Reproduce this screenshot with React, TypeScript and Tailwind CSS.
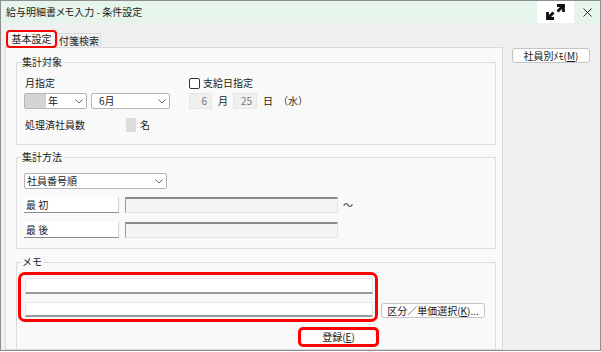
import React from "react";

const Chevron = () => (
  <svg width="8" height="5" viewBox="0 0 8 5">
    <path d="M0.5 0.5L4 4L7.5 0.5" fill="none" stroke="#606060" strokeWidth="1" />
  </svg>
);

const ExpandIcon = () => (
  <svg width="19" height="16" viewBox="0 0 19 16">
    <path d="M11 1.5H17.5V8" fill="none" stroke="#111" strokeWidth="2.8" />
    <path d="M17.5 1.5L11.5 7.5" fill="none" stroke="#111" strokeWidth="2.8" />
    <path d="M1.5 8V14.5H8" fill="none" stroke="#111" strokeWidth="2.8" />
    <path d="M1.5 14.5L7.5 8.5" fill="none" stroke="#111" strokeWidth="2.8" />
  </svg>
);

const CloseIcon = () => (
  <svg width="9" height="9" viewBox="0 0 9 9">
    <path d="M0.5 0.5L8.5 8.5M8.5 0.5L0.5 8.5" fill="none" stroke="#333" strokeWidth="1" />
  </svg>
);

export default function App() {
  return (
    <div className="w-[601px] h-[351px] border border-[#8e8e8e] bg-[#f0f0f0] flex flex-col overflow-hidden font-['Noto_Sans_CJK_JP','Noto_Sans',sans-serif] text-[10px] leading-[14px] text-[#1b1b1b]">
      {/* title bar */}
      <div className="h-[22px] shrink-0 flex items-stretch bg-[#e6f5eb]">
        <div className="pl-[5px] flex items-center text-[10px] text-[#222] [font-feature-settings:'palt']">給与明細書メモ入力 - 条件設定</div>
        <div className="ml-auto w-[37px] bg-white flex items-center justify-center">
          <ExpandIcon />
        </div>
        <div className="w-[26px] flex items-center justify-center">
          <CloseIcon />
        </div>
      </div>

      {/* body */}
      <div className="flex flex-1 min-h-0">
        {/* left column */}
        <div className="w-[502px] shrink-0 flex flex-col pl-[4px] pt-[7px]">
          {/* tabs */}
          <div className="flex items-start h-[17px] shrink-0">
            <div className="relative z-10 ml-[1px] w-[51px] h-[18px] border-[2.5px] border-[#ff0000] rounded-[4px] bg-[#f9f9f9] flex items-center justify-center">
              基本設定
            </div>
            <div className="mt-[3px] w-[44px] h-[14px] border border-b-0 border-[#d9d9d9] flex items-center justify-center">
              付箋検索
            </div>
          </div>

          {/* tab panel */}
          <div className="flex-1 border border-[#dadada] bg-[#f9f9f9] pl-[10px] pr-[6px] pt-[7px] overflow-hidden">
            {/* group 1 */}
            <fieldset className="border border-[#dcdcdc] h-[90px]">
              <legend className="ml-[4px] px-[1px] leading-[14px]">集計対象</legend>
              <div className="flex mt-[7px]">
                <div className="pl-[7px] w-[172px] shrink-0">
                  <div className="h-[14px] pl-[1px]">月指定</div>
                  <div className="flex mt-[3px]">
                    <div className="w-[63px] h-[16px] border border-[#b5b5b5] rounded-[2px] bg-white flex items-center overflow-hidden">
                      <div className="w-[21px] h-full bg-[#d4d4d4]" />
                      <span className="ml-[2px]">年</span>
                      <span className="ml-auto mr-[3px] flex"><Chevron /></span>
                    </div>
                    <div className="ml-[4px] w-[79px] h-[16px] border border-[#b5b5b5] rounded-[2px] bg-white flex items-center">
                      <span className="ml-[7px]">6月</span>
                      <span className="ml-auto mr-[3px] flex"><Chevron /></span>
                    </div>
                  </div>
                  <div className="flex items-center mt-[9px] h-[14px]">
                    <span className="pl-[1px]">処理済社員数</span>
                    <div className="ml-[41px] w-[10px] h-[14px] bg-[#dcdcdc]" />
                    <span className="ml-[4px]">名</span>
                  </div>
                </div>
                <div>
                  <div className="flex items-center h-[14px]">
                    <div className="w-[11px] h-[11px] border border-[#333] rounded-[2px] bg-white" />
                    <span className="ml-[3px]">支給日指定</span>
                  </div>
                  <div className="flex items-center mt-[3px]">
                    <div className="w-[23px] h-[16px] bg-[#f0f0f0] border border-[#e6e6e6] flex items-center justify-end pr-[4px] text-[#7a7a7a]">6</div>
                    <span className="ml-[6px]">月</span>
                    <div className="ml-[5px] w-[24px] h-[16px] bg-[#f0f0f0] border border-[#e6e6e6] flex items-center justify-end pr-[4px] text-[#7a7a7a]">25</div>
                    <span className="ml-[6px]">日</span>
                    <span className="ml-[5px] text-[#333]">（水）</span>
                  </div>
                </div>
              </div>
            </fieldset>

            {/* group 2 */}
            <fieldset className="mt-[5px] border border-[#dcdcdc] h-[99px]">
              <legend className="ml-[4px] px-[1px] leading-[14px]">集計方法</legend>
              <div className="ml-[7px] mt-[9px] w-[143px] h-[16px] border border-[#b5b5b5] rounded-[2px] bg-white flex items-center">
                <span className="ml-[2px]">社員番号順</span>
                <span className="ml-auto mr-[3px] flex"><Chevron /></span>
              </div>
              <div className="flex items-center ml-[7px] mt-[8px]">
                <div className="w-[95px] h-[16px] bg-white border-b border-r border-b-[#8c8c8c] border-r-[#cfcfcf] pl-[2px] flex items-center">最 初</div>
                <div className="ml-[6px] w-[213px] h-[16px] bg-[#f4f4f4] border border-[#e4e4e4] border-t-2 border-t-[#8a8a8a] border-l-[#9a9a9a]" />
                <span className="ml-[5px] text-[#333]">～</span>
              </div>
              <div className="flex items-center ml-[7px] mt-[9px]">
                <div className="w-[95px] h-[16px] bg-white border-b border-r border-b-[#8c8c8c] border-r-[#cfcfcf] pl-[2px] flex items-center">最 後</div>
                <div className="ml-[6px] w-[213px] h-[16px] bg-[#f4f4f4] border border-[#e4e4e4] border-t-2 border-t-[#8a8a8a] border-l-[#9a9a9a]" />
              </div>
            </fieldset>

            {/* group 3 */}
            <fieldset className="mt-[6px] border border-[#dcdcdc] h-[120px]">
              <legend className="ml-[4px] px-[1px] leading-[14px]">メモ</legend>
              <div className="flex items-end mt-[3px] ml-[1px]">
                <div className="w-[360px] h-[50px] border-[3px] border-[#ff0000] rounded-[7px] pl-[4px] pt-[3px]">
                  <div className="w-[348px] h-[16px] bg-white border border-[#e6e6e6] border-b-2 border-b-[#9a9a9a]" />
                  <div className="mt-[8px] w-[348px] h-[15px] bg-white border border-[#e6e6e6] border-b-2 border-b-[#9a9a9a]" />
                </div>
                <div className="ml-[3px] mb-[4px] w-[104px] h-[15px] border border-[#c4c4c4] rounded-[3px] bg-[#fdfdfd] flex items-center justify-center">
                  区分／単価選択(<span className="underline">K</span>)...
                </div>
              </div>
              <div className="ml-[1px] mt-[5px] w-[361px] flex justify-end">
                <div className="w-[81px] h-[20px] border-[3px] border-[#ff0000] rounded-[5px] bg-[#fdfdfd] flex items-center justify-center">
                  登録(<span className="underline">E</span>)
                </div>
              </div>
            </fieldset>
          </div>
        </div>

        {/* right column */}
        <div className="pt-[25px] pl-[9px]">
          <div className="w-[78px] h-[15px] border border-[#c4c4c4] rounded-[3px] bg-[#fdfdfd] flex items-center justify-center">
            社員別ﾒﾓ(<span className="underline">M</span>)
          </div>
        </div>
      </div>
    </div>
  );
}
